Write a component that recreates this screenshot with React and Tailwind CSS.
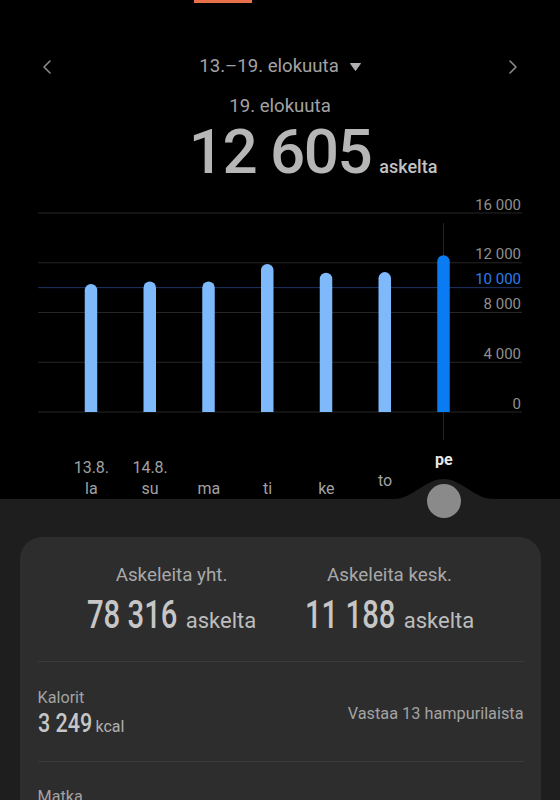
import { ChevronLeft, ChevronRight } from "lucide-react"

const days = [
    { top: "13.8.", label: "la", value: 10290 },
    { top: "14.8.", label: "su", value: 10500 },
    { label: "ma", value: 10500 },
    { label: "ti", value: 11900 },
    { label: "ke", value: 11200 },
    { label: "to", value: 11250, pb: "pb-[9px]" },
    { label: "pe", value: 12605, pb: "pb-[30px]", selected: true },
]

const ticks = [
    { value: 16000, text: "16 000" },
    { value: 12000, text: "12 000" },
    { value: 10000, text: "10 000", goal: true },
    { value: 8000, text: "8 000" },
    { value: 4000, text: "4 000" },
    { value: 0, text: "0" },
]

// chart coordinates inside the svg
const BASE = 222
const PX = 199 / 16000
const y = v => BASE - v * PX
const barX = i => 91 + i * 58.75

const Chart = () => (
    <svg width="560" height="250" className="block">
        {ticks.map(t => (
            <g key={t.value}>
                <line
                    x1="38"
                    x2="522"
                    y1={y(t.value)}
                    y2={y(t.value)}
                    stroke={t.goal ? "#1d3566" : "#262626"}
                    strokeWidth="1"
                />
                <text
                    x="521"
                    y={y(t.value) - 3.5}
                    textAnchor="end"
                    fontFamily="Roboto, sans-serif"
                    fontSize="15"
                    fill={t.goal ? "#2d7cf0" : "#8f8f8f"}
                >
                    {t.text}
                </text>
            </g>
        ))}
        <line x1="443.5" x2="443.5" y1="33" y2="250" stroke="#14244a" strokeWidth="1" />
        {days.map((d, i) => {
            const top = y(d.value)
            const x = barX(i) - 6.25
            return (
                <path
                    key={d.label}
                    d={`M${x} ${BASE} V${top + 6.25} A6.25 6.25 0 0 1 ${x + 12.5} ${top + 6.25} V${BASE} Z`}
                    fill={d.selected ? "#0b7bf4" : "#7db9fb"}
                />
            )
        })}
    </svg>
)

const Big = ({ width, scale, children }) => (
    <span className={`inline-block ${width} whitespace-nowrap`}>
        <span className={`inline-block origin-left ${scale}`}>{children}</span>
    </span>
)

const Stat = ({ title, value }) => (
    <div className="w-[218px] flex flex-col items-center">
        <div className="text-[18.8px] leading-[20px] text-[#a9a9a9]">{title}</div>
        <div className="mt-[10px] flex items-baseline gap-[8px]">
            <span className="text-[39px] leading-[40px] font-medium text-[#c6c6c6]">
                <Big width="w-[91px]" scale="scale-x-[0.75]">{value}</Big>
            </span>
            <span className="text-[22px] text-[#bdbdbd]">askelta</span>
        </div>
    </div>
)

const App = () => {
    return (
        <div className="w-[560px] h-[800px] overflow-hidden bg-black font-['Roboto',sans-serif]">
            <div className="h-[3px] w-[58px] ml-[194px] bg-[#e8704a]" />

            <div className="mt-[52px] h-[24px] px-[35px] flex items-center justify-between text-[#8a8a8a]">
                <ChevronLeft size={24} strokeWidth={1.6} />
                <div className="flex items-center gap-[11px] text-[18.6px] text-[#a3a3a3]">
                    <span>13.–19. elokuuta</span>
                    <svg width="11" height="8" viewBox="0 0 11 8">
                        <path d="M0.5 0.5 H10.5 L5.5 7.5 Z" fill="#b0b0b0" stroke="#b0b0b0" strokeLinejoin="round" />
                    </svg>
                </div>
                <ChevronRight size={24} strokeWidth={1.6} />
            </div>

            <div className="mt-[17px] text-center text-[18.6px] leading-[20px] text-[#a3a3a3]">19. elokuuta</div>

            <div className="mt-[5px] grid grid-cols-[1fr_auto_1fr] items-baseline">
                <div />
                <div className="text-[62px] leading-[62px] font-medium tracking-[-1.5px] text-[#b6b6b6]">12 605</div>
                <div className="pl-[8px] text-[18px] font-medium text-[#c2c2c2]">askelta</div>
            </div>

            <div className="mt-[7px]">
                <Chart />
            </div>

            <div className="h-[59px] pl-[62px] flex">
                {days.map(d => (
                    <div
                        key={d.label}
                        className={`w-[58.75px] flex flex-col items-center justify-end text-[16px] leading-[18px] ${d.pb || "pb-[1px]"}`}
                    >
                        {d.top && <div className="text-[#a2a2a2]">{d.top}</div>}
                        <div
                            className={
                                d.selected
                                    ? "font-bold text-[#e6e6e6]"
                                    : d.top
                                        ? "mt-[3.5px] text-[#a2a2a2]"
                                        : "text-[#a2a2a2]"
                            }
                        >
                            {d.label}
                        </div>
                    </div>
                ))}
            </div>

            <div className="relative bg-[#1e1e1e] h-[301px] pt-[38px] px-[20px]">
                <svg width="110" height="21" className="absolute left-[389px] -top-[20px]">
                    <path d="M0 21 L4 20 C24 20 36 0 54.5 0 C73 0 85 20 105 20 L110 21 Z" fill="#1e1e1e" />
                </svg>
                <div className="absolute left-[427px] -top-[15px] w-[34px] h-[34px] rounded-full bg-[#8a8a8a]" />

                <div className="w-[521px] rounded-[22px] bg-[#2d2d2d] pt-[28px] px-[17.5px] h-[300px]">
                    <div className="flex justify-center">
                        <Stat title="Askeleita yht." value="78 316" />
                        <Stat title="Askeleita kesk." value="11 188" />
                    </div>

                    <div className="mt-[24px] h-px bg-[#3b3b3b]" />

                    <div className="pt-[27px] pb-[22px] flex items-center justify-between">
                        <div>
                            <div className="text-[16.2px] leading-[18px] text-[#a3a3a3]">Kalorit</div>
                            <div className="mt-[3px] flex items-baseline gap-[3px]">
                                <span className="text-[25px] leading-[28px] font-medium text-[#c6c6c6]">
                                    <Big width="w-[55px]" scale="scale-x-[0.86]">3 249</Big>
                                </span>
                                <span className="text-[16px] text-[#b0b0b0]">kcal</span>
                            </div>
                        </div>
                        <div className="text-[16.3px] text-[#a3a3a3]">Vastaa 13 hampurilaista</div>
                    </div>

                    <div className="h-px bg-[#3b3b3b]" />

                    <div className="pt-[26px] text-[16.2px] leading-[18px] text-[#a3a3a3]">Matka</div>
                </div>
            </div>
        </div>
    )
}

export default App
